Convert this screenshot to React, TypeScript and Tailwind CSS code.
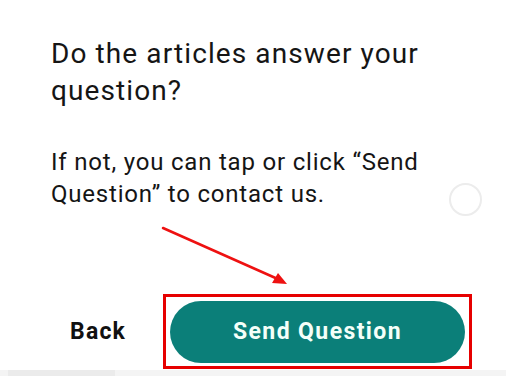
export default function App() {
  return (
    <div className="relative flex h-[376px] w-[506px] flex-col overflow-hidden bg-white font-['Roboto',sans-serif] text-[#151515]">
      <div className="pl-[51px] pt-[35px]">
        <h1 className="text-[28px] leading-[37px] font-normal tracking-[1.1px] whitespace-nowrap">
          Do the articles answer your
          <br />
          question?
        </h1>
        <p className="mt-[37px] text-[24px] leading-[32px] tracking-[0.8px] whitespace-nowrap">
          If not, you can tap or click “Send
          <br />
          Question” to contact us.
        </p>
      </div>

      {/* faint loading ring */}
      <div className="absolute left-[449px] top-[183px] h-[33px] w-[33px] rounded-full border-2 border-[#ececec]" />

      {/* annotation arrow */}
      <svg className="absolute left-0 top-0" width="506" height="376" viewBox="0 0 506 376">
        <line x1="163" y1="228" x2="280" y2="280" stroke="#ee1111" strokeWidth="2.5" strokeLinecap="round" />
        <polygon points="287,284 272,283 278,273" fill="#ee1111" />
      </svg>

      <div className="mt-[84px] flex items-center">
        <button className="ml-[70px] w-[56px] text-left text-[23px] leading-[26px] font-bold tracking-[1.2px] text-[#111] whitespace-nowrap">
          Back
        </button>
        <div className="ml-[37px] border-[3px] border-[#e60000] p-[4px] pb-[3px]">
          <button className="flex h-[62px] w-[295px] items-center justify-center rounded-full bg-[#0b7f79] text-[23px] font-bold tracking-[1.4px] text-[#f4fff9]">
            Send Question
          </button>
        </div>
      </div>

      <div className="mt-auto flex h-[6px] bg-[#f4f4f4]">
        <div className="ml-[8px] w-[107px] bg-[#ebebeb]" />
      </div>
    </div>
  );
}
